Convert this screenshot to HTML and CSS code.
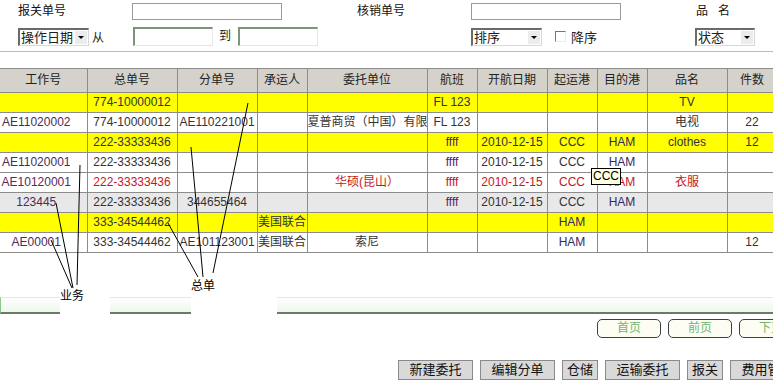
FILE: index.html
```html
<!DOCTYPE html>
<html lang="zh-CN">
<head>
    <meta charset="UTF-8">
    <title>委托列表</title>
    <link rel="stylesheet" href="styles.css">
</head>
<body>
<div class="page">
    <div class="filters">
        <div class="frow frow-top">
            <span class="lbl lbl-first">报关单号</span>
            <input class="txt txt-long" type="text">
            <span class="lbl lbl-mid">核销单号</span>
            <input class="txt txt-long" type="text">
            <span class="lbl lbl-mid">品&nbsp;&nbsp;&nbsp;名</span>
        </div>
        <div class="frow frow-bottom">
            <div class="from-box">
                <div class="select select-op"><span>操作日期</span><b class="caret"></b></div>
                <span class="lbl-small">从</span>
            </div>
            <input class="txt txt-date" type="text">
            <span class="to-lbl">到</span>
            <input class="txt txt-date" type="text">
            <div class="select select-sort"><span>排序</span><b class="caret"></b></div>
            <div class="check-box"><i class="check"></i><span>降序</span></div>
            <div class="select select-state"><span>状态</span><b class="caret"></b></div>
        </div>
    </div>

    <div class="rule"></div>

    <table class="grid">
        <colgroup>
            <col style="width:87px"><col style="width:90px"><col style="width:80px"><col style="width:50px">
            <col style="width:120px"><col style="width:50px"><col style="width:70px"><col style="width:50px">
            <col style="width:50px"><col style="width:80px"><col style="width:50px"><col style="width:60px">
        </colgroup>
        <thead>
            <tr>
                <th>工作号</th><th>总单号</th><th>分单号</th><th>承运人</th><th>委托单位</th><th>航班</th>
                <th>开航日期</th><th>起运港</th><th>目的港</th><th>品名</th><th>件数</th><th></th>
            </tr>
        </thead>
        <tbody>
            <tr class="row-yellow">
                <td class="job"></td><td>774-10000012</td><td></td><td></td><td></td><td>FL 123</td>
                <td></td><td></td><td></td><td>TV</td><td></td><td></td>
            </tr>
            <tr>
                <td class="job">AE11020002</td><td>774-10000012</td><td>AE110221001</td><td></td><td>夏普商贸（中国）有限</td><td>FL 123</td>
                <td></td><td></td><td></td><td>电视</td><td>22</td><td></td>
            </tr>
            <tr class="row-yellow">
                <td class="job"></td><td>222-33333436</td><td></td><td></td><td></td><td class="flt">ffff</td>
                <td>2010-12-15</td><td>CCC</td><td class="port">HAM</td><td>clothes</td><td>12</td><td></td>
            </tr>
            <tr>
                <td class="job">AE11020001</td><td>222-33333436</td><td></td><td></td><td></td><td class="flt">ffff</td>
                <td>2010-12-15</td><td>CCC</td><td class="port">HAM</td><td></td><td></td><td></td>
            </tr>
            <tr class="row-red">
                <td class="job">AE10120001</td><td>222-33333436</td><td></td><td></td><td>华硕(昆山）</td><td>ffff</td>
                <td>2010-12-15</td><td>CCC</td><td>HAM</td><td>衣服</td><td></td><td></td>
            </tr>
            <tr class="row-grey">
                <td class="job">123445</td><td>222-33333436</td><td>344655464</td><td></td><td></td><td class="flt">ffff</td>
                <td>2010-12-15</td><td>CCC</td><td class="port">HAM</td><td></td><td></td><td></td>
            </tr>
            <tr class="row-yellow">
                <td class="job"></td><td>333-34544462</td><td></td><td>美国联合</td><td></td><td></td>
                <td></td><td class="port">HAM</td><td></td><td></td><td></td><td></td>
            </tr>
            <tr>
                <td class="job">AE00001</td><td>333-34544462</td><td>AE101123001</td><td>美国联合</td><td>索尼</td><td></td>
                <td></td><td class="port">HAM</td><td></td><td></td><td>12</td><td></td>
            </tr>
        </tbody>
    </table>

    <div class="scroller"></div>

    <div class="pager">
        <button class="pg-btn">首页</button>
        <button class="pg-btn">前页</button>
        <button class="pg-btn">下页</button>
    </div>

    <div class="actions">
        <button class="act-btn w4">新建委托</button>
        <button class="act-btn w4">编辑分单</button>
        <button class="act-btn w2">仓储</button>
        <button class="act-btn w4">运输委托</button>
        <button class="act-btn w2">报关</button>
        <button class="act-btn w4">费用管理</button>
    </div>

    <div class="tooltip">CCC</div>

    <svg class="marks" width="773" height="391" viewBox="0 0 773 391">
        <g stroke="#000" stroke-width="1" fill="none">
            <line x1="80" y1="165" x2="77" y2="285"/>
            <line x1="56" y1="203" x2="73" y2="288"/>
            <line x1="51" y1="240" x2="72" y2="288"/>
            <line x1="248" y1="103" x2="213" y2="273"/>
            <line x1="191" y1="147" x2="203" y2="277"/>
            <line x1="168" y1="223" x2="198" y2="277"/>
        </g>
    </svg>
    <div class="note note-biz">业务</div>
    <div class="note note-master">总单</div>
</div>
</body>
</html>
```

FILE: styles.css
```css
body {
    margin: 0;
    padding: 0;
    background: #fff;
    font-family: "Liberation Sans", "Noto Sans CJK SC", sans-serif;
    font-size: 12px;
    color: #222;
    overflow: hidden;
}

.page {
    position: relative;
    width: 860px;
    height: 391px;
}

.filters {
    padding-top: 3px;
}

.frow {
    display: flex;
    align-items: center;
    padding-left: 18px;
}

.frow-top {
    height: 17px;
}

.frow-bottom {
    height: 19px;
    margin-top: 7px;
}

.lbl {
    width: 114px;
    line-height: 17px;
    color: #111;
}

.lbl-mid {
    margin-left: 75px;
}

.txt {
    box-sizing: border-box;
    margin: 0;
    padding: 0;
    background: #fff;
}

.txt-long {
    width: 150px;
    height: 17px;
    border: 1px solid #9a9a9a;
}

.txt-date {
    width: 80px;
    height: 19px;
    border-top: 2px solid #7d947a;
    border-left: 2px solid #7d947a;
    border-right: 1px solid #e6e6e6;
    border-bottom: 1px solid #e6e6e6;
}

.from-box {
    width: 115px;
    display: flex;
    align-items: center;
}

.lbl-small {
    margin-left: 3px;
}

.to-lbl {
    width: 19px;
    padding-left: 6px;
    line-height: 19px;
}

.select {
    box-sizing: border-box;
    height: 18px;
    display: flex;
    align-items: center;
    justify-content: space-between;
    background: #fff;
    border-top: 2px solid #6a6a6a;
    border-left: 2px solid #6a6a6a;
    border-right: 1px solid #d8d8d8;
    border-bottom: 1px solid #d8d8d8;
    padding-left: 1px;
    font-size: 13px;
    line-height: 15px;
}

.select-op {
    width: 71px;
}

.select-sort {
    width: 71px;
    margin-left: 153px;
}

.select-state {
    width: 60px;
}

.caret {
    width: 12px;
    height: 13px;
    margin-right: 1px;
    background: #ececec;
    display: flex;
    align-items: center;
    justify-content: center;
}

.caret::after {
    content: "";
    border-left: 3px solid transparent;
    border-right: 3px solid transparent;
    border-top: 3px solid #000;
}

.check-box {
    width: 153px;
    box-sizing: border-box;
    padding-left: 13px;
    display: flex;
    align-items: center;
    font-size: 13px;
}

.check {
    box-sizing: border-box;
    width: 11px;
    height: 11px;
    background: #fff;
    border-top: 1px solid #777;
    border-left: 1px solid #777;
    border-right: 1px solid #eee;
    border-bottom: 1px solid #eee;
    margin-right: 5px;
}

.rule {
    height: 1px;
    margin-top: 5px;
    background: #a9c9a3;
}

.grid {
    margin-top: 16px;
    border-collapse: collapse;
    table-layout: fixed;
    width: 837px;
}

.grid th,
.grid td {
    border: 1px solid #8c8c8c;
    padding: 0;
    text-align: center;
    white-space: nowrap;
    overflow: hidden;
}

.grid th:first-child,
.grid td:first-child {
    border-left: none;
}

.grid th {
    height: 23px;
    background: #d5d2cb;
    font-weight: normal;
    color: #222;
    line-height: 23px;
}

.grid td {
    height: 19px;
    line-height: 19px;
    color: #333;
}

.grid td.job {
    padding-right: 14px;
    color: #4a2c55;
}

.grid td.flt {
    color: #5a1d5e;
}

.grid td.port {
    color: #352a5c;
}

.row-yellow td {
    background: #ffff00;
}

.row-grey td {
    background: #e8e8e8;
}

.row-red td {
    color: #c4161c;
}

.row-red td.job {
    color: #5a2a60;
}

.scroller {
    box-sizing: border-box;
    height: 17px;
    margin-top: 44px;
    border-top: 1px solid #e6e6e6;
    border-left: 1px solid #8fc48a;
    border-bottom: 2px solid #6d7a69;
    background: linear-gradient(#ffffff, #eef8ec);
}

.pager {
    display: flex;
    gap: 7px;
    padding-left: 597px;
    margin-top: 5px;
}

.pg-btn {
    width: 64px;
    height: 19px;
    padding: 0;
    border: 1px solid #3f3f3f;
    border-radius: 5px;
    background: #fdfdf3;
    color: #6fb56d;
    font-family: inherit;
    font-size: 12px;
    line-height: 17px;
}

.actions {
    display: flex;
    gap: 7px;
    padding-left: 398px;
    margin-top: 22px;
}

.act-btn {
    height: 20px;
    padding: 0;
    border: 1px solid #8a8a8a;
    background: #d9d9d9;
    color: #111;
    font-family: inherit;
    font-size: 13px;
    line-height: 18px;
}

.act-btn.w4 {
    width: 75px;
}

.act-btn.w2 {
    width: 36px;
}

.tooltip {
    position: absolute;
    left: 591px;
    top: 168px;
    box-sizing: border-box;
    width: 30px;
    height: 17px;
    border: 1px solid #000;
    background: #ffffe1;
    color: #000;
    line-height: 15px;
    text-align: center;
}

.marks {
    position: absolute;
    left: 0;
    top: 0;
    pointer-events: none;
}

.note {
    position: absolute;
    background: #fff;
    color: #000;
    line-height: 14px;
}

.note-biz {
    left: 60px;
    top: 289px;
    width: 50px;
    height: 26px;
}

.note-master {
    left: 191px;
    top: 279px;
    width: 86px;
    height: 36px;
}
```
